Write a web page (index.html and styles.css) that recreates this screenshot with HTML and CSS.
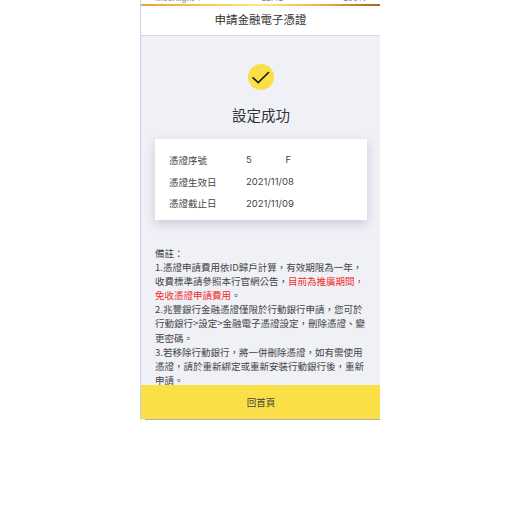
FILE: index.html
```html
<!DOCTYPE html>
<html lang="zh-Hant">
<head>
<meta charset="utf-8">
<title>申請金融電子憑證</title>
<link rel="stylesheet" href="styles.css">
</head>
<body>
<main class="phone">
  <div class="status"><span>Moonlight ▾</span><span>11:41</span><span>100%</span></div>
  <div class="rainbow"></div>
  <header class="title">申請金融電子憑證</header>
  <section class="content">
    <svg class="check" viewBox="0 0 26 26" width="26" height="26" aria-hidden="true">
      <circle cx="13" cy="13" r="13" fill="#fadf46"/>
      <path d="M4.6 13.4 L10.2 18.6 L21 8" fill="none" stroke="#1c1c1c" stroke-width="1.7"/>
    </svg>
    <h1 class="done">設定成功</h1>
    <div class="card">
      <div class="row"><span class="label">憑證序號</span><span class="value serial"><span>5</span><span>F</span></span></div>
      <div class="row"><span class="label">憑證生效日</span><span class="value">2021/11/08</span></div>
      <div class="row"><span class="label">憑證截止日</span><span class="value">2021/11/09</span></div>
    </div>
    <div class="notes">
      <p>備註：</p>
      <p>1.憑證申請費用依ID歸戶計算，有效期限為一年，收費標準請參照本行官網公告，<em>目前為推廣期間，免收憑證申請費用</em>。</p>
      <p>2.兆豐銀行金融憑證僅限於行動銀行申請，您可於行動銀行&gt;設定&gt;金融電子憑證設定，刪除憑證、變更密碼。</p>
      <p>3.若移除行動銀行，將一併刪除憑證，如有需使用憑證，請於重新綁定或重新安裝行動銀行後，重新申請。</p>
    </div>
  </section>
  <button class="home">回首頁</button>
  <div class="edge"></div>
</main>
</body>
</html>
```
FILE: styles.css
```css
* { box-sizing: border-box; }
html, body { margin: 0; padding: 0; background: #fff; }
body { font-family: "Noto Sans CJK TC", "Liberation Sans", sans-serif; color: #333; }
.phone {
  position: relative;
  width: 240px;
  height: 420px;
  margin-left: 140px;
  border-left: 1px solid #c5d2ea;
  background: #f0f1f7;
  overflow: hidden;
  display: flex;
  flex-direction: column;
}
.status {
  height: 4px;
  background: #fff;
  overflow: hidden;
  display: flex;
  justify-content: space-between;
  padding: 0 14px;
  font: 9px/1 "Liberation Sans", sans-serif;
  color: #888;
}
.status span { margin-top: -6px; }
.rainbow {
  height: 2px;
  background: linear-gradient(90deg, #e5a43a 0%, #f6cf5a 30%, #fbe88a 50%, #e9b44c 75%, #a8641f 100%);
}
.title {
  height: 30px;
  background: #fff;
  border-bottom: 1px solid #d8d9de;
  text-align: center;
  font-size: 11.5px;
  line-height: 26px;
  color: #333;
}
.content {
  flex: 1;
  min-height: 0;
  display: flex;
  flex-direction: column;
  align-items: center;
  padding: 28px 0 0 1px;
}
.check { flex: none; display: block; }
.done {
  margin: 13px 0 0;
  font-size: 14.5px;
  font-weight: 400;
  line-height: 24px;
  color: #333;
}
.card {
  flex: none;
  width: 212px;
  height: 81px;
  margin-top: 12px;
  padding: 10px 14px 0;
  background: #fff;
  box-shadow: 0 4px 10px rgba(70, 70, 90, .22);
  display: flex;
  flex-direction: column;
  font-size: 9.5px;
}
.row { display: flex; align-items: center; flex: none; height: 21.7px; }
.label { width: 77px; color: #444; }
.value { font-family: "Inter", "Liberation Sans", sans-serif; font-size: 9.5px; color: #444; }
.serial { display: flex; width: 45px; justify-content: space-between; }
.notes {
  flex: none;
  width: 212px;
  margin-top: 26px;
  font-size: 9.5px;
  line-height: 14.1px;
  color: #444;
}
.notes p { margin: 0; }
.notes em { font-style: normal; color: #f02c2c; }
.home {
  position: absolute;
  left: 0;
  right: 0;
  bottom: 1px;
  height: 34px;
  border: 0;
  padding: 0 0 1px 1px;
  background: #fadf46;
  font-family: inherit;
  font-size: 9.5px;
  color: #444;
}
.edge {
  position: absolute;
  left: 4px;
  right: 0;
  bottom: 0;
  height: 1px;
  background: #b0b0b0;
}
```
